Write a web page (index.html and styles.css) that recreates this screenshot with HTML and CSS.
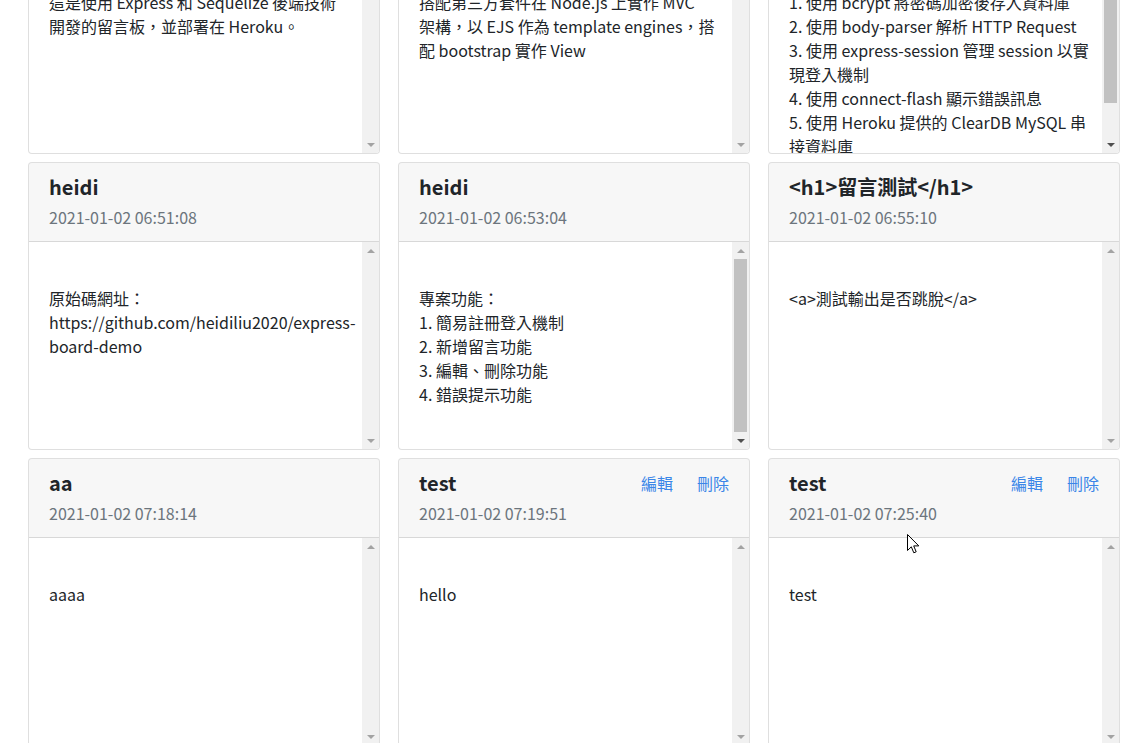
FILE: index.html
```html
<!DOCTYPE html>
<html lang="zh-TW">
<head>
<meta charset="utf-8">
<title>留言板</title>
<link rel="stylesheet" href="styles.css">
</head>
<body>
<div class="page" id="page">
  <main class="board">
    <article class="card">
      <header class="card-header">
        <div class="head-row"><h5 class="title">heidi</h5></div>
        <div class="date">2021-01-02 06:45:21</div>
      </header>
      <div class="card-body">
        <div class="body-text">這是使用 Express 和 Sequelize 後端技術<br>開發的留言板，並部署在 Heroku。</div>
        <div class="scrollbar"><span class="sb-btn up"></span><span class="sb-track"></span><span class="sb-btn down"></span></div>
      </div>
    </article>
    <article class="card">
      <header class="card-header">
        <div class="head-row"><h5 class="title">heidi</h5></div>
        <div class="date">2021-01-02 06:47:36</div>
      </header>
      <div class="card-body">
        <div class="body-text">搭配第三方套件在 Node.js 上實作 MVC<br>架構，以 EJS 作為 template engines，搭<br>配 bootstrap 實作 View</div>
        <div class="scrollbar"><span class="sb-btn up"></span><span class="sb-track"></span><span class="sb-btn down"></span></div>
      </div>
    </article>
    <article class="card">
      <header class="card-header">
        <div class="head-row"><h5 class="title">heidi</h5></div>
        <div class="date">2021-01-02 06:49:50</div>
      </header>
      <div class="card-body">
        <div class="body-text">1. 使用 bcrypt 將密碼加密後存入資料庫<br>2. 使用 body-parser 解析 HTTP Request<br>3. 使用 express-session 管理 session 以實<br>現登入機制<br>4. 使用 connect-flash 顯示錯誤訊息<br>5. 使用 Heroku 提供的 ClearDB MySQL 串<br>接資料庫</div>
        <div class="scrollbar"><span class="sb-btn up"></span><span class="sb-track"><span class="sb-thumb" style="height:140px"></span></span><span class="sb-btn down active"></span></div>
      </div>
    </article>

    <article class="card">
      <header class="card-header">
        <div class="head-row"><h5 class="title">heidi</h5></div>
        <div class="date">2021-01-02 06:51:08</div>
      </header>
      <div class="card-body">
        <div class="body-text">原始碼網址：<br>https://github.com/heidiliu2020/express-<br>board-demo</div>
        <div class="scrollbar"><span class="sb-btn up"></span><span class="sb-track"></span><span class="sb-btn down"></span></div>
      </div>
    </article>
    <article class="card">
      <header class="card-header">
        <div class="head-row"><h5 class="title">heidi</h5></div>
        <div class="date">2021-01-02 06:53:04</div>
      </header>
      <div class="card-body">
        <div class="body-text">專案功能：<br>1. 簡易註冊登入機制<br>2. 新增留言功能<br>3. 編輯、刪除功能<br>4. 錯誤提示功能</div>
        <div class="scrollbar"><span class="sb-btn up"></span><span class="sb-track"><span class="sb-thumb" style="height:173px"></span></span><span class="sb-btn down active"></span></div>
      </div>
    </article>
    <article class="card">
      <header class="card-header">
        <div class="head-row"><h5 class="title">&lt;h1&gt;留言測試&lt;/h1&gt;</h5></div>
        <div class="date">2021-01-02 06:55:10</div>
      </header>
      <div class="card-body">
        <div class="body-text">&lt;a&gt;測試輸出是否跳脫&lt;/a&gt;</div>
        <div class="scrollbar"><span class="sb-btn up"></span><span class="sb-track"></span><span class="sb-btn down"></span></div>
      </div>
    </article>

    <article class="card">
      <header class="card-header">
        <div class="head-row"><h5 class="title">aa</h5></div>
        <div class="date">2021-01-02 07:18:14</div>
      </header>
      <div class="card-body">
        <div class="body-text">aaaa</div>
        <div class="scrollbar"><span class="sb-btn up"></span><span class="sb-track"></span><span class="sb-btn down"></span></div>
      </div>
    </article>
    <article class="card">
      <header class="card-header">
        <div class="head-row">
          <h5 class="title">test</h5>
          <nav class="actions"><a href="#">編輯</a><a href="#">刪除</a></nav>
        </div>
        <div class="date">2021-01-02 07:19:51</div>
      </header>
      <div class="card-body">
        <div class="body-text">hello</div>
        <div class="scrollbar"><span class="sb-btn up"></span><span class="sb-track"></span><span class="sb-btn down"></span></div>
      </div>
    </article>
    <article class="card">
      <header class="card-header">
        <div class="head-row">
          <h5 class="title">test</h5>
          <nav class="actions"><a href="#">編輯</a><a href="#">刪除</a></nav>
        </div>
        <div class="date">2021-01-02 07:25:40</div>
      </header>
      <div class="card-body">
        <div class="body-text">test</div>
        <div class="scrollbar"><span class="sb-btn up"></span><span class="sb-track"></span><span class="sb-btn down"></span></div>
      </div>
    </article>
  </main>
</div>
<svg class="cursor" width="13" height="21" viewBox="0 0 13 21" aria-hidden="true">
  <path d="M0.5 0.5 L0.5 16.5 L4.3 12.8 L6.8 18.8 L9.2 17.8 L6.7 11.9 L11.8 11.9 Z" fill="#fff" stroke="#000" stroke-width="1" stroke-linejoin="miter"/>
</svg>
<script src="script.js"></script>
</body>
</html>
```

FILE: styles.css
```css
html, body {
  margin: 0;
  height: 100%;
}

body {
  font-family: "Noto Sans CJK TC", "Noto Sans", sans-serif;
  color: #212529;
  background: #fff;
  overflow: hidden;
}

.page {
  height: 100vh;
  overflow: hidden;
}

.board {
  display: grid;
  grid-template-columns: repeat(3, 1fr);
  gap: 8px 18px;
  padding: 24px 21px 40px 28px;
}

.card {
  display: flex;
  flex-direction: column;
  border: 1px solid rgba(0, 0, 0, 0.125);
  border-radius: 4px;
  background: #fff;
  overflow: hidden;
}

.card-header {
  padding: 12px 20px;
  background: rgba(0, 0, 0, 0.03);
  border-bottom: 1px solid rgba(0, 0, 0, 0.125);
}

.head-row {
  display: flex;
  justify-content: space-between;
  align-items: center;
  margin-bottom: 6px;
}

.title {
  margin: 0;
  font-size: 20px;
  font-weight: 700;
  line-height: 24px;
  color: #212529;
}

.date {
  font-size: 16px;
  line-height: 24px;
  color: #6c757d;
}

.actions {
  display: flex;
}

.actions a {
  margin-left: 24px;
  font-size: 16px;
  line-height: 24px;
  color: #3a86e8;
  text-decoration: none;
}

.card-body {
  display: flex;
  height: 207px;
}

.body-text {
  flex: 1;
  min-width: 0;
  padding: 44px 20px;
  overflow: hidden;
  font-size: 16px;
  line-height: 24px;
  white-space: nowrap;
  color: #212529;
}

.scrollbar {
  display: flex;
  flex-direction: column;
  width: 17px;
  flex: none;
  background: #f1f1f1;
}

.sb-btn {
  display: flex;
  align-items: center;
  justify-content: center;
  height: 17px;
  flex: none;
}

.sb-btn::before {
  content: "";
  width: 0;
  height: 0;
  border-left: 4px solid transparent;
  border-right: 4px solid transparent;
}

.sb-btn.up::before {
  border-bottom: 4px solid #a3a3a3;
}

.sb-btn.down::before {
  border-top: 4px solid #a3a3a3;
}

.sb-btn.down.active::before {
  border-top-color: #505050;
}

.sb-btn.up.active::before {
  border-bottom-color: #505050;
}

.sb-track {
  flex: 1;
  display: flex;
  flex-direction: column;
}

.sb-thumb {
  display: block;
  margin: 0 2px;
  background: #c1c1c1;
}

.cursor {
  position: fixed;
  left: 907px;
  top: 534px;
  pointer-events: none;
}
```

FILE: script.js
```js
document.getElementById('page').scrollTop = 158;
```
